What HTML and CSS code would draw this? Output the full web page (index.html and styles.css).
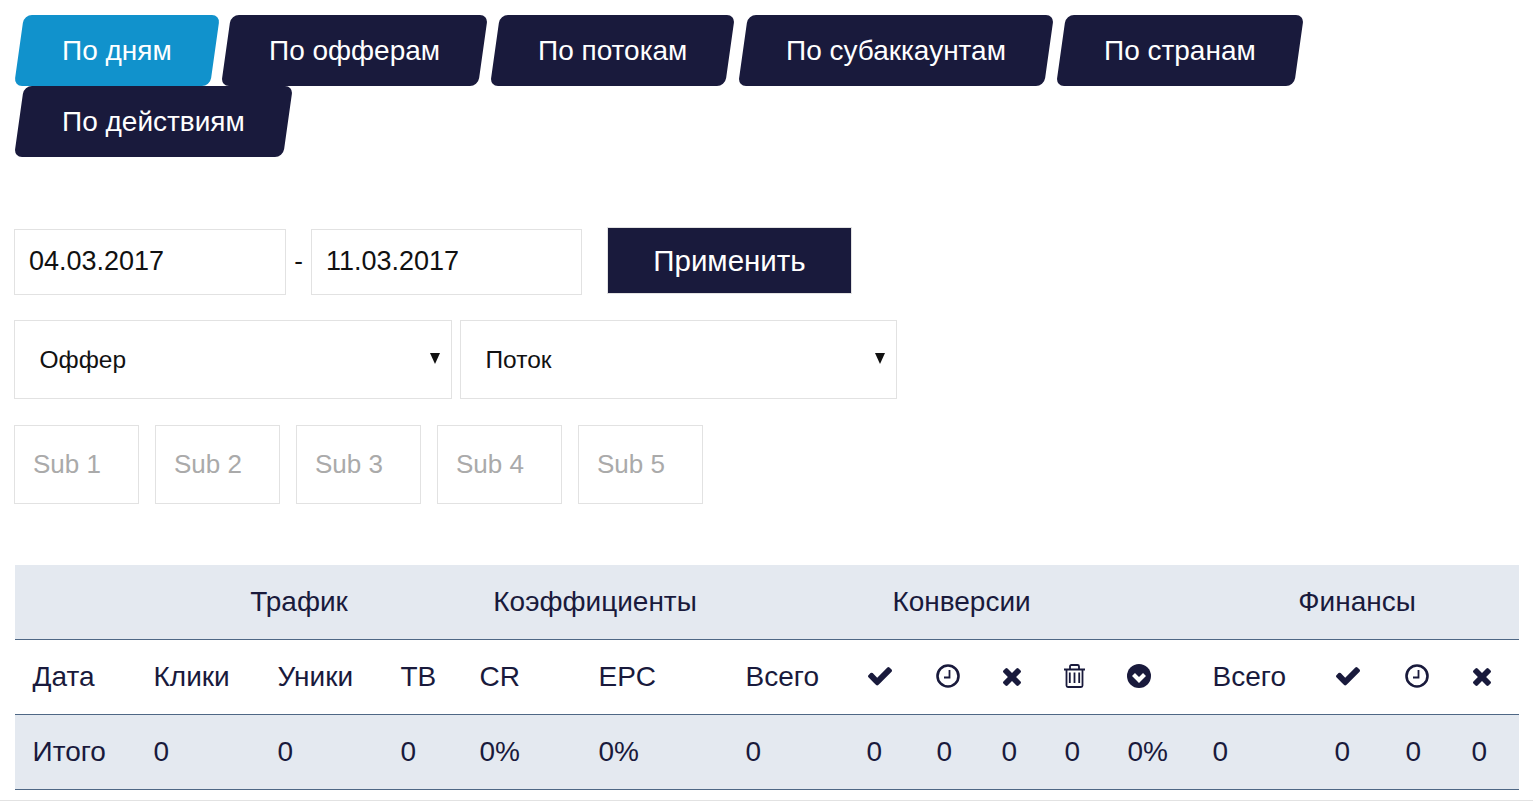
FILE: index.html
```html
<!DOCTYPE html>
<html lang="ru">
<head>
<meta charset="utf-8">
<title>Статистика</title>
<link rel="stylesheet" href="styles.css">
</head>
<body>
<div class="page">
  <nav class="tabs">
    <a class="tab tab-active"><span>По дням</span></a>
    <a class="tab"><span>По офферам</span></a>
    <a class="tab"><span>По потокам</span></a>
    <a class="tab"><span>По субаккаунтам</span></a>
    <a class="tab"><span>По странам</span></a>
    <a class="tab"><span>По действиям</span></a>
  </nav>
  <form class="filters">
    <div class="date-row">
      <input class="field date" type="text" value="04.03.2017">
      <span class="dash">-</span>
      <input class="field date date-end" type="text" value="11.03.2017">
      <button class="apply" type="button">Применить</button>
    </div>
    <div class="select-row">
      <div class="select-wrap"><select class="field select"><option>Оффер</option></select></div>
      <div class="select-wrap"><select class="field select"><option>Поток</option></select></div>
    </div>
    <div class="sub-row">
      <input class="field sub" type="text" placeholder="Sub 1">
      <input class="field sub" type="text" placeholder="Sub 2">
      <input class="field sub" type="text" placeholder="Sub 3">
      <input class="field sub" type="text" placeholder="Sub 4">
      <input class="field sub" type="text" placeholder="Sub 5">
    </div>
  </form>
  <table class="stats">
    <colgroup>
      <col class="c121"><col class="c124"><col class="c123"><col class="c79"><col class="c119"><col class="c147"><col class="c121">
      <col class="c70"><col class="c65"><col class="c63"><col class="c63"><col class="c85"><col class="c122"><col class="c71"><col class="c66"><col class="c65">
    </colgroup>
    <thead>
      <tr class="shaded group-row">
        <th></th>
        <th colspan="3" class="group">Трафик</th>
        <th colspan="2" class="group">Коэффициенты</th>
        <th colspan="6" class="group">Конверсии</th>
        <th colspan="4" class="group">Финансы</th>
      </tr>
      <tr>
        <th>Дата</th><th>Клики</th><th>Уники</th><th>ТВ</th><th>CR</th><th>EPC</th><th>Всего</th>
        <th><svg class="ico ico-check" viewBox="121 334 1550 1188"><path d="M1671 566q0 40-28 68l-724 724-136 136q-28 28-68 28t-68-28l-136-136-362-362q-28-28-28-68t28-68l136-136q28-28 68-28t68 28l294 295 656-657q28-28 68-28t68 28l136 136q28 28 28 68z"/></svg></th>
        <th><svg class="ico ico-clock" viewBox="0 0 24 24"><circle cx="12" cy="12" r="10.5"/><path d="M13.500 6v7.500H8"/></svg></th>
        <th><svg class="ico ico-close" viewBox="302 366 1188 1188"><path d="M1490 1322q0 40-28 68l-136 136q-28 28-68 28t-68-28l-294-294-294 294q-28 28-68 28t-68-28l-136-136q-28-28-28-68t28-68l294-294-294-294q-28-28-28-68t28-68l136-136q28-28 68-28t68 28l294 294 294-294q28-28 68-28t68 28l136 136q28 28 28 68t-28 68l-294 294 294 294q28 28 28 68z"/></svg></th>
        <th><svg class="ico ico-trash" viewBox="0 0 21 24"><path d="M0 5.500h21M2.500 5.500v16q0 1.500 1.500 1.500h13q1.500 0 1.500-1.500v-16M6 5.500V2.500Q6 1 7.500 1h6Q15 1 15 2.500v3M5.800 8.500V19M10.500 8.500V19M15.200 8.500V19"/></svg></th>
        <th><svg class="ico ico-circle" viewBox="0 0 24 24"><circle cx="12" cy="12" r="12"/><path d="M6.500 10.500 12 16l5.500-5.500"/></svg></th>
        <th>Всего</th>
        <th><svg class="ico ico-check" viewBox="121 334 1550 1188"><path d="M1671 566q0 40-28 68l-724 724-136 136q-28 28-68 28t-68-28l-136-136-362-362q-28-28-28-68t28-68l136-136q28-28 68-28t68 28l294 295 656-657q28-28 68-28t68 28l136 136q28 28 28 68z"/></svg></th>
        <th><svg class="ico ico-clock" viewBox="0 0 24 24"><circle cx="12" cy="12" r="10.5"/><path d="M13.500 6v7.500H8"/></svg></th>
        <th><svg class="ico ico-close" viewBox="302 366 1188 1188"><path d="M1490 1322q0 40-28 68l-136 136q-28 28-68 28t-68-28l-294-294-294 294q-28 28-68 28t-68-28l-136-136q-28-28-28-68t28-68l294-294-294-294q-28-28-28-68t28-68l136-136q28-28 68-28t68 28l294 294 294-294q28-28 68-28t68 28l136 136q28 28 28 68t-28 68l-294 294 294 294q28 28 28 68z"/></svg></th>
      </tr>
    </thead>
    <tbody>
      <tr class="shaded">
        <td>Итого</td><td>0</td><td>0</td><td>0</td><td>0%</td><td>0%</td><td>0</td><td>0</td><td>0</td><td>0</td><td>0</td><td>0%</td><td>0</td><td>0</td><td>0</td><td>0</td>
      </tr>
    </tbody>
  </table>
</div>
</body>
</html>
```
FILE: styles.css
```css
* { box-sizing: border-box; }
html, body { margin: 0; padding: 0; background: #fff; height: 100%; overflow: hidden; }
body { font-family: "Liberation Sans", Arial, sans-serif; color: #191a3c; }
.page { height: 801px; border-bottom: 1px solid #e2e2e2; padding: 15px 14px 0 14px; }

.tabs { display: flex; flex-wrap: wrap; padding-left: 4.5px; }
.tab { display: block; height: 71px; margin-right: 12px; padding: 0 43px; background: #191a3c; color: #fff; border-radius: 8px; transform: skewX(-8deg); font-size: 28px; line-height: 71px; }
.tab span { display: block; transform: skewX(8deg); white-space: nowrap; }
.tab-active { background: #1192cc; }

.filters { margin-top: 71px; }
.field { border: 1px solid #e2e2e2; background: #fff; color: #111; font-family: inherit; border-radius: 0; outline: none; }
.date-row { display: flex; align-items: center; height: 67px; }
.date { width: 272px; height: 66px; padding: 0 14px; font-size: 27px; }
.date-end { width: 271px; }
.dash { width: 25px; text-align: center; font-size: 26px; color: #111; }
.apply { width: 245px; height: 67px; margin-left: 25px; margin-top: -2px; background: #191a3c; color: #fff; border: 1px solid #e2e2e2; font-family: inherit; font-size: 29.500px; padding: 0; }
.select-row { display: flex; gap: 8px; margin-top: 25px; }
.select-wrap { position: relative; }
.select-wrap:first-child { width: 438px; }
.select-wrap:last-child { width: 437px; }
.select-wrap::after { content: ""; position: absolute; right: 12px; top: 33px; border-left: 5px solid transparent; border-right: 5px solid transparent; border-top: 11px solid #111; }
.select { display: block; width: 100%; height: 79px; padding: 0 24.500px; font-size: 24.500px; appearance: none; -webkit-appearance: none; }
.sub-row { display: flex; gap: 16px; margin-top: 26px; }
.sub { width: 125px; height: 79px; padding: 0 18px; font-size: 26px; }
.sub::placeholder { color: #aaa; opacity: 1; }

.stats { margin: 61px 0 0 1px; width: 1504px; border-collapse: collapse; table-layout: fixed; font-size: 28px; }
.stats tr { height: 75px; border-bottom: 1px solid #4e6785; }
.stats .group-row { height: 74px; }
.stats th, .stats td { padding: 0 0 0 17.500px; text-align: left; font-weight: 400; vertical-align: middle; white-space: nowrap; }
.stats th.group { padding: 0; text-align: center; }
.shaded { background: #e4e9f0; }
.c121 { width: 121px; } .c124 { width: 124px; } .c123 { width: 123px; } .c79 { width: 79px; } .c119 { width: 119px; }
.c147 { width: 147px; } .c70 { width: 70px; } .c65 { width: 65px; } .c63 { width: 63px; } .c85 { width: 85px; } .c122 { width: 122px; }
.c71 { width: 71px; } .c66 { width: 66px; }

.ico { display: block; fill: #191a3c; }
.ico-check { width: 24px; height: 18.500px; margin-left: 1px; }
.ico-close { width: 18px; height: 18px; margin-left: 1px; }
.ico-clock { width: 24px; height: 24px; margin: -1px 0 0 -1px; fill: none; stroke: #191a3c; stroke-width: 2.600; }
.ico-clock path { stroke-width: 1.800; }
.ico-trash { width: 21px; height: 24px; margin: -1px 0 0 -1px; fill: none; stroke: #191a3c; stroke-width: 1.800; }
.ico-circle { width: 24px; height: 24px; margin: -1px 0 0 -1px; }
.ico-circle path { fill: none; stroke: #fff; stroke-width: 4.200; }
```
